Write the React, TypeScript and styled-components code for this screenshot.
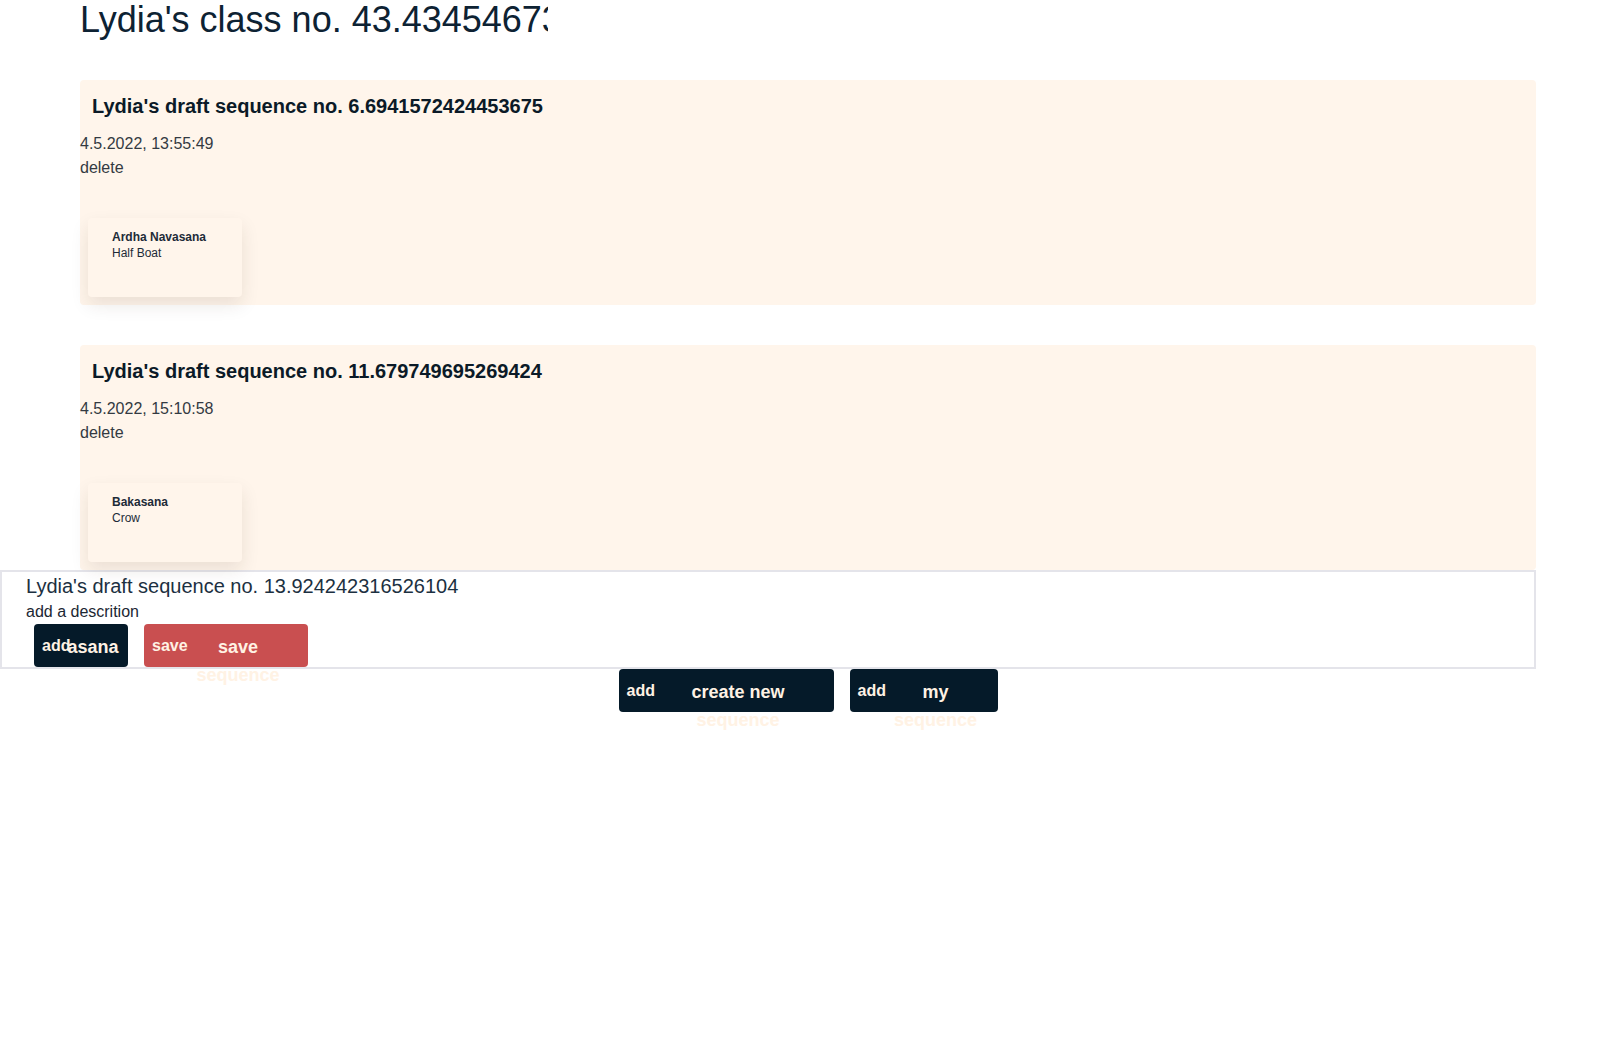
import React from "react";
import styled, { createGlobalStyle } from "styled-components";

const GlobalStyle = createGlobalStyle`
  html, body {
    margin: 0;
    padding: 0;
    background: #ffffff;
    font-family: "Liberation Sans", Arial, sans-serif;
  }
  * { box-sizing: border-box; }
`;

const Page = styled.div`
  width: 1616px;
  min-height: 1059px;
  background: #ffffff;
`;

const Main = styled.main`
  padding-left: 80px;
  width: 1536px;
`;

const ClassTitle = styled.h1`
  margin: 0 0 40px;
  width: 468px;
  overflow: hidden;
  white-space: nowrap;
  font-size: 36px;
  line-height: 40px;
  font-weight: 400;
  color: #0d2233;
`;

const SequenceList = styled.div`
  display: flex;
  flex-direction: column;
  gap: 40px;
`;

const SequenceCard = styled.section`
  width: 1456px;
  background: #fff5eb;
  border-radius: 4px;
  padding-bottom: 8px;
`;

const CardTitle = styled.h3`
  margin: 15px 12px 14px;
  font-size: 20px;
  line-height: 23px;
  font-weight: 700;
  color: #0b1a27;
`;

const MetaLine = styled.div`
  font-size: 16px;
  line-height: 24px;
  color: #333a42;
`;

const AsanaRow = styled.div`
  display: flex;
  gap: 8px;
  padding: 38px 8px 0;
`;

const AsanaCard = styled.div`
  width: 154px;
  height: 79px;
  padding: 11px 24px 0;
  background: #fff5eb;
  border-radius: 4px;
  box-shadow: 0 8px 18px rgba(60, 40, 20, 0.1);
  font-size: 12px;
  line-height: 16px;
  color: #1d2b38;
`;

const AsanaName = styled.div`
  font-weight: 700;
`;

const AsanaEnglish = styled.div`
  font-weight: 400;
`;

const DraftPanel = styled.section`
  width: 1536px;
  border: 2px solid #e4e4ea;
  padding: 3px 24px 0;
`;

const DraftTitle = styled.div`
  font-size: 20px;
  line-height: 23px;
  color: #1c3041;
`;

const DraftDescription = styled.div`
  margin-top: 4px;
  font-size: 16px;
  line-height: 19px;
  color: #1c2733;
`;

const ButtonRow = styled.div`
  display: flex;
  gap: 16px;
  margin-top: 3px;
  padding-left: 8px;
`;

const NavRow = styled.nav`
  display: flex;
  justify-content: center;
  gap: 16px;
  width: 1616px;
`;

const ActionButton = styled.button<{ $w: number; $tone: "dark" | "red" }>`
  display: flex;
  align-items: center;
  width: ${(p) => p.$w}px;
  height: 43px;
  padding: 0 8px;
  border: none;
  border-radius: 4px;
  background: ${(p) => (p.$tone === "red" ? "#c94f50" : "#051a29")};
  color: #fff2e4;
  font-family: inherit;
  cursor: pointer;
  overflow: visible;
`;

const IconText = styled.span`
  flex: none;
  width: 24px;
  font-size: 16px;
  font-weight: 700;
  white-space: nowrap;
  text-align: left;
`;

const Label = styled.span`
  flex: 1;
  min-width: 0;
  height: 28px;
  margin-top: 2px;
  font-size: 18px;
  line-height: 28px;
  font-weight: 700;
  text-align: center;
`;

type Btn = { icon: string; label: string; w: number; tone: "dark" | "red" };

const Button = ({ icon, label, w, tone }: Btn) => (
  <ActionButton $w={w} $tone={tone}>
    <IconText>{icon}</IconText>
    <Label>{label}</Label>
  </ActionButton>
);

const sequences = [
  {
    title: "Lydia's draft sequence no. 6.6941572424453675",
    date: "4.5.2022, 13:55:49",
    asanas: [{ name: "Ardha Navasana", english: "Half Boat" }],
  },
  {
    title: "Lydia's draft sequence no. 11.679749695269424",
    date: "4.5.2022, 15:10:58",
    asanas: [{ name: "Bakasana", english: "Crow" }],
  },
];

export default function App() {
  return (
    <Page>
      <GlobalStyle />
      <Main>
        <ClassTitle>Lydia's class no. 43.43454673285914</ClassTitle>
        <SequenceList>
          {sequences.map((s) => (
            <SequenceCard key={s.title}>
              <CardTitle>{s.title}</CardTitle>
              <MetaLine>{s.date}</MetaLine>
              <MetaLine>delete</MetaLine>
              <AsanaRow>
                {s.asanas.map((a) => (
                  <AsanaCard key={a.name}>
                    <AsanaName>{a.name}</AsanaName>
                    <AsanaEnglish>{a.english}</AsanaEnglish>
                  </AsanaCard>
                ))}
              </AsanaRow>
            </SequenceCard>
          ))}
        </SequenceList>
      </Main>
      <DraftPanel>
        <DraftTitle>Lydia's draft sequence no. 13.924242316526104</DraftTitle>
        <DraftDescription>add a descrition</DraftDescription>
        <ButtonRow>
          <Button icon="add" label="asana" w={94} tone="dark" />
          <Button icon="save" label="save sequence" w={164} tone="red" />
        </ButtonRow>
      </DraftPanel>
      <NavRow>
        <Button icon="add" label="create new sequence" w={215} tone="dark" />
        <Button icon="add" label="my sequence" w={148} tone="dark" />
      </NavRow>
    </Page>
  );
}
